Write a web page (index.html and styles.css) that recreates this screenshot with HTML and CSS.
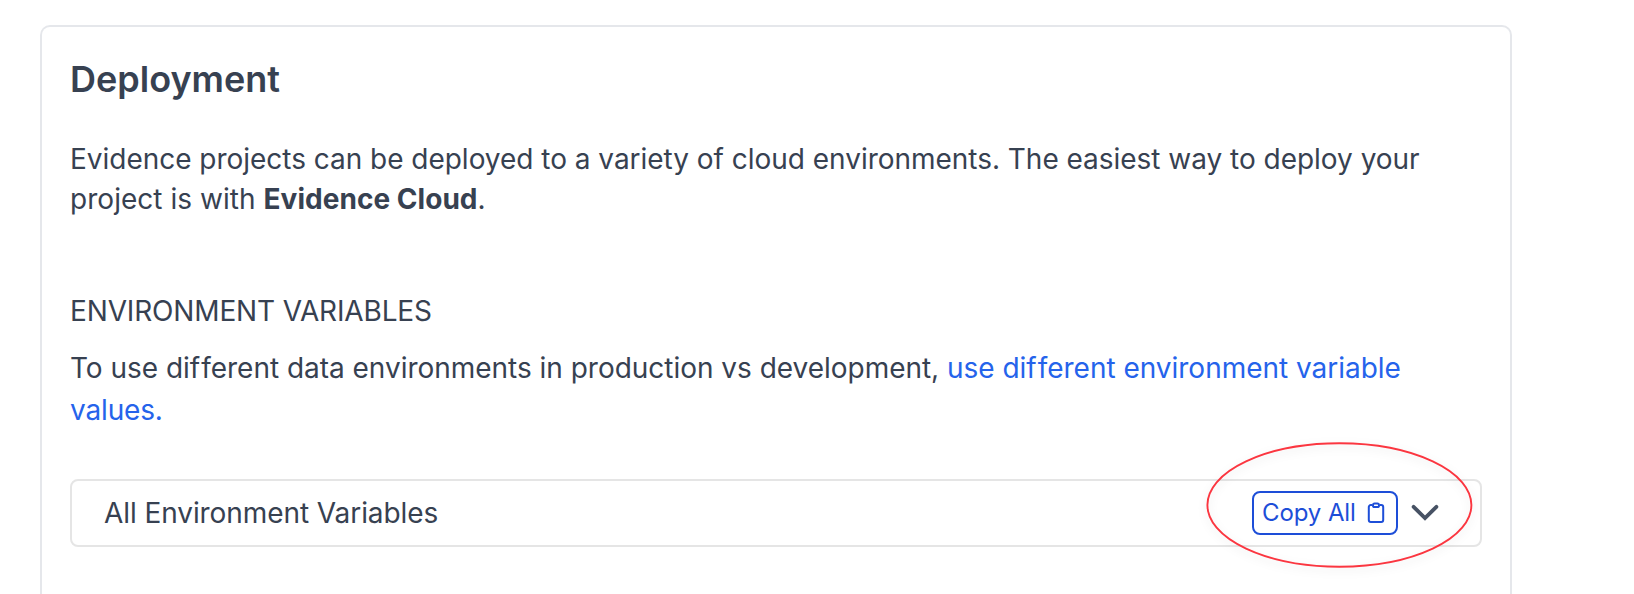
FILE: index.html
```html
<!DOCTYPE html>
<html lang="en">
<head>
<meta charset="utf-8">
<title>Deployment</title>
<link rel="stylesheet" href="styles.css">
</head>
<body>
<main class="card">
  <h1 class="title">Deployment</h1>
  <p class="intro"><span class="intro-first">Evidence projects can be deployed to a variety of cloud environments. The easiest way to deploy your</span><br>project is with <strong>Evidence Cloud</strong>.</p>
  <h2 class="subtitle">ENVIRONMENT VARIABLES</h2>
  <p class="hint">To use di<span class="loose">f</span>ferent data environments in production vs development, <a class="link">use di<span class="loose">f</span>ferent environment variable<br><span class="link-end">values.</span></a></p>
  <div class="row">
    <span class="row-label">All Environment Variables</span>
    <button class="copy"><span class="copy-label">Copy All</span>
      <svg class="clip" width="18" height="22" viewBox="0 0 18 22" fill="none" stroke="currentColor" stroke-width="2"><path d="M5 3H3.800A2 2 0 0 0 1.800 5V18A2 2 0 0 0 3.800 20H14.200A2 2 0 0 0 16.200 18V5A2 2 0 0 0 14.200 3H13"/><rect x="6" y="1.500" width="6" height="3.600" rx="1.600"/></svg>
    </button>
    <svg class="chevron" width="28" height="18" viewBox="0 0 28 18" fill="none" stroke="#475264" stroke-width="3.800" stroke-linecap="round" stroke-linejoin="miter"><path d="M2.600 2.800L14 14L25.400 2.800"/></svg>
    <svg class="marker" width="286" height="144" viewBox="0 0 286 144" fill="none"><ellipse cx="143.400" cy="72" rx="132" ry="61.700" stroke="#fb3640" stroke-width="1.900"/></svg>
  </div>
</main>
</body>
</html>
```
FILE: styles.css
```css
body {
  display: flow-root;
  margin: 0;
  padding-top: 25px;
  background: #fff;
  color: #374151;
  font-family: Inter, "Liberation Sans", sans-serif;
  font-size: 28px;
}
.card {
  box-sizing: border-box;
  width: 1472px;
  height: 569px;
  margin: 0 0 0 40px;
  padding: 28px 28px 0;
  border: 2px solid #e5e7eb;
  border-bottom: 0;
  border-radius: 10px 10px 0 0;
}
.title {
  margin: 0;
  font-size: 36px;
  line-height: 48px;
  font-weight: 600;
}
.intro {
  margin: 36px 0 0;
  line-height: 40px;
  letter-spacing: 0.04px;
  white-space: nowrap;
}
.intro-first { letter-spacing: -0.025px; }
.intro strong { font-weight: 700; }
.subtitle {
  margin: 72px 0 0;
  font-size: 28px;
  line-height: 40px;
  font-weight: 400;
  letter-spacing: -0.15px;
}
.hint {
  margin: 16px 0 0;
  line-height: 42px;
  letter-spacing: -0.022px;
  white-space: nowrap;
}
.loose { letter-spacing: 1px; }
.link { color: #2563eb; }
.link-end { letter-spacing: -0.15px; }
.row {
  position: relative;
  box-sizing: border-box;
  display: flex;
  align-items: center;
  height: 68px;
  margin-top: 48px;
  padding: 0 41px 0 32px;
  border: 2px solid #e5e5e5;
  border-radius: 8px;
}
.row-label {
  flex: 1;
  letter-spacing: -0.08px;
}
.copy {
  box-sizing: border-box;
  display: flex;
  align-items: center;
  justify-content: space-between;
  width: 146px;
  height: 44px;
  margin-right: 13px;
  padding: 0 11px 0 8px;
  border: 2px solid #1d4ed8;
  border-radius: 8px;
  background: #fff;
  color: #1d4ed8;
  font: 400 24px Inter, "Liberation Sans", sans-serif;
  letter-spacing: -0.1px;
  white-space: nowrap;
}
.copy-label { padding-bottom: 2px; }
.marker {
  position: absolute;
  left: 1124px;
  top: -48px;
  filter: drop-shadow(0 3px 4px rgba(0, 0, 0, 0.1));
}
```
